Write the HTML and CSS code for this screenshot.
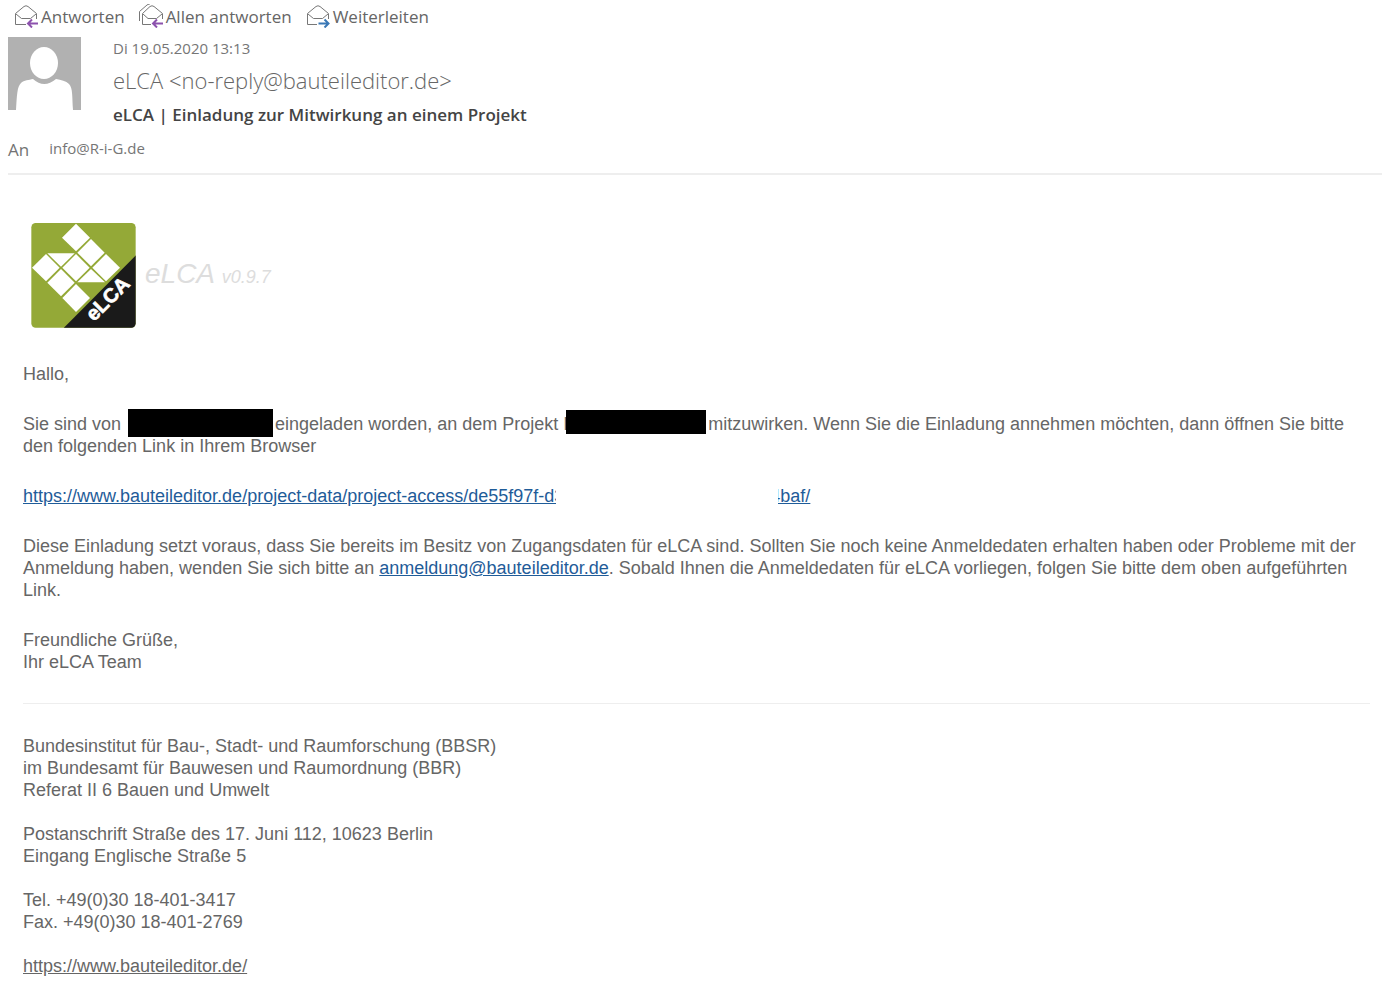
FILE: index.html
```html
<!DOCTYPE html>
<html lang="de">
<head>
<meta charset="utf-8">
<meta name="viewport" content="width=device-width, initial-scale=1">
<title>eLCA | Einladung zur Mitwirkung an einem Projekt</title>
<link rel="stylesheet" href="styles.css">
</head>
<body>
<header class="mail-header">
  <nav class="actions" aria-label="Nachricht">
    <button type="button" class="action">
      <svg class="icon" viewBox="0 0 26 24" aria-hidden="true"><path class="env" d="M12 20.500H1.500V9.500L10 2.500Q12 1 14 2.500L22.500 9.500V15M2 10L7.500 14.500H16.500L22 10"/><path class="arrow reply" d="M24 19.500H14M18 15.500L14 19.500L18 23.500"/></svg>
      <span>Antworten</span>
    </button>
    <button type="button" class="action">
      <svg class="icon" viewBox="0 0 26 24" aria-hidden="true"><path class="env" d="M12 20.500H3.500V9.500L11 2.500Q13 1 15 2.500L23.500 9.500V15M4 10L9 14.500H17.500L23 10M.500 17V7.500L8 1Q9 0 10.500 .500"/><path class="arrow reply" d="M24 19.500H14M18 15.500L14 19.500L18 23.500"/></svg>
      <span>Allen antworten</span>
    </button>
    <button type="button" class="action">
      <svg class="icon" viewBox="0 0 26 24" aria-hidden="true"><path class="env" d="M11 20.500H1.500V9.500L10 2.500Q12 1 14 2.500L22.500 9.500V15M2 10L7.500 14.500H16.500L22 10"/><path class="arrow forward" d="M12.500 19.500H22.500M18.500 15.500L22.500 19.500L18.500 23.500"/></svg>
      <span>Weiterleiten</span>
    </button>
  </nav>
  <div class="sender">
    <svg class="avatar" viewBox="0 0 73 73" role="img" aria-label="Absender"><path fill="#b1b1b1" d="M0 0H73V73H0z"/><ellipse cx="36" cy="26" rx="14" ry="16" fill="#fff"/><path fill="#fff" d="M8 73C9 58 9 50 13 46C16 43 21 43 25 42Q36 52 48 42C53 43 58 44 61 47C65 51 64 60 65 73z"/></svg>
    <div class="meta">
      <time class="date" datetime="2020-05-19T13:13">Di 19.05.2020 13:13</time>
      <div class="from">eLCA &lt;no-reply@bauteileditor.de&gt;</div>
      <h1 class="subject">eLCA | Einladung zur Mitwirkung an einem Projekt</h1>
    </div>
  </div>
  <div class="recipient"><span class="to">An</span><span class="address">info@R-i-G.de</span></div>
</header>
<main class="message">
  <div class="brand">
    <svg class="logo" viewBox="33 39 315 315" role="img" aria-label="eLCA">
      <defs><clipPath id="round"><rect x="34" y="39" width="313" height="314" rx="13"/></clipPath></defs>
      <g clip-path="url(#round)">
        <path fill="#94a937" d="M33 39H348V354H33z"/>
        <path fill="#1a1a1a" d="M348 136V354H131z"/>
        <g fill="#fff">
          <path d="M168 41L210 83L168 124L126 83z"/>
          <path d="M213 87L254 128L213 169L172 128z"/>
          <path d="M258 132L300 173L258 214L217 173z"/>
          <path d="M168 132L209 173L168 214L127 173z"/>
          <path d="M78 132L119 173L78 214L36 173z"/>
          <path d="M123 177L164 218L123 259L82 218z"/>
          <path d="M168 222L210 264L168 306L127 264z"/>
          <path d="M82 130H164L123 170z"/>
          <path d="M213 177L255 217H172z"/>
        </g>
      </g>
      <text class="logo-text" transform="translate(222 336) rotate(-45)">eLCA</text>
    </svg>
    <div class="product">eLCA <small class="version">v0.9.7</small></div>
  </div>
  <p>Hallo,</p>
  <p>Sie sind von <span class="redacted name"></span>eingeladen worden, an dem Projekt I<span class="redacted project"></span>mitzuwirken. Wenn Sie die Einladung annehmen möchten, dann öffnen Sie bitte den folgenden Link in Ihrem Browser</p>
  <p><a class="link" href="#">https://www.bauteileditor.de/project-data/project-access/de55f97f-d3<span class="erased"></span>4baf/</a></p>
  <p>Diese Einladung setzt voraus, dass Sie bereits im Besitz von Zugangsdaten für eLCA sind. Sollten Sie noch keine Anmeldedaten erhalten haben oder Probleme mit der Anmeldung haben, wenden Sie sich bitte an <a class="link" href="mailto:anmeldung@bauteileditor.de">anmeldung@bauteileditor.de</a>. Sobald Ihnen die Anmeldedaten für eLCA vorliegen, folgen Sie bitte dem oben aufgeführten Link.</p>
  <p>Freundliche Grüße,<br>Ihr eLCA Team</p>
  <footer class="signature">
    <p>Bundesinstitut für Bau-, Stadt- und Raumforschung (BBSR)<br>im Bundesamt für Bauwesen und Raumordnung (BBR)<br>Referat II 6 Bauen und Umwelt</p>
    <p>Postanschrift Straße des 17. Juni 112, 10623 Berlin<br>Eingang Englische Straße 5</p>
    <p>Tel. +49(0)30 18-401-3417<br>Fax. +49(0)30 18-401-2769</p>
    <p><a class="site" href="https://www.bauteileditor.de/">https://www.bauteileditor.de/</a></p>
  </footer>
</main>
</body>
</html>
```
FILE: styles.css
```css
body {
  margin: 0;
  background: #fff;
  color: #666;
  font: 18px/22px "Liberation Sans", Arial, sans-serif;
}

.mail-header {
  margin: 0 14px 0 8px;
  padding: 4px 0 9px;
  border-bottom: 2px solid #eee;
  font-family: "Open Sans", "Segoe UI", sans-serif;
}

.actions {
  display: flex;
  gap: 14px;
  padding-left: 6px;
}

.action {
  display: flex;
  gap: 1px;
  padding: 0;
  border: 0;
  background: none;
  color: #666;
  font: 17px/26px "Open Sans", "Segoe UI", sans-serif;
}

.icon {
  width: 26px;
  height: 24px;
}

.env {
  fill: none;
  stroke: #777;
}

.arrow {
  fill: none;
  stroke-width: 2;
}

.reply {
  stroke: #8c52ad;
}

.forward {
  stroke: #3a78b5;
}

.sender {
  display: flex;
  gap: 32px;
  margin-top: 7px;
}

.avatar {
  width: 73px;
  height: 73px;
}

.meta {
  display: flex;
  flex-direction: column;
}

.date {
  color: #767676;
  font-size: 15px;
  line-height: 22px;
}

.from {
  color: #666;
  font-size: 22px;
  font-weight: 300;
  line-height: 42px;
}

.subject {
  margin: 0;
  color: #444;
  font-size: 17px;
  font-weight: 600;
  line-height: 28px;
}

.recipient {
  display: flex;
  gap: 20px;
  margin-top: 7px;
}

.to {
  color: #737373;
  font-size: 17px;
  line-height: 28px;
}

.address {
  color: #767676;
  font-size: 15px;
  line-height: 24px;
}

.message {
  padding: 48px 26px 8px 23px;
}

.message p {
  margin: 0 0 28px;
}

.brand {
  display: flex;
  align-items: center;
  gap: 9px;
  margin-bottom: 35px;
  padding-left: 8px;
}

.logo {
  width: 105px;
  height: 105px;
}

.logo-text {
  fill: #fff;
  stroke: #fff;
  stroke-width: 2;
  font: bold 60px "Liberation Sans", Arial, sans-serif;
}

.product {
  color: #ddd;
  font-size: 28px;
  font-style: italic;
}

.version {
  font-size: 18px;
}

.redacted {
  display: inline-block;
  position: relative;
  margin: -4px 2px;
  background: #000;
}

.name {
  width: 145px;
  height: 28px;
  vertical-align: -3px;
}

.project {
  width: 140px;
  height: 24px;
  margin-left: -2px;
}

.link {
  color: #1f5c99;
}

.erased {
  display: inline-block;
  position: relative;
  width: 222px;
  height: 22px;
  margin: -2px -8px;
  background: #fff;
  vertical-align: middle;
}

.signature {
  margin-top: 30px;
  padding-top: 31px;
  border-top: 1px solid #eee;
}

.signature p {
  margin-bottom: 22px;
}

.site {
  color: #666;
}
```
